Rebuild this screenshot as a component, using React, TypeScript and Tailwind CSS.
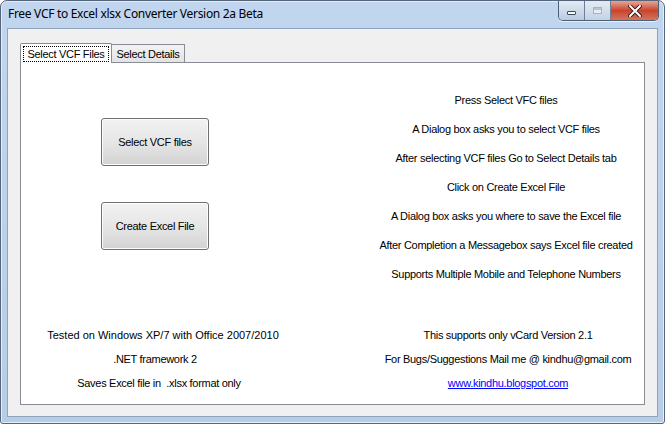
import * as React from "react"

const steps = [
  "Press Select VFC files",
  "A Dialog box asks you to select VCF files",
  "After selecting VCF files Go to Select Details tab",
  "Click on Create Excel File",
  "A Dialog box asks you where to save the Excel file",
  "After Completion a Messagebox says Excel file created",
  "Supports Multiple Mobile and Telephone Numbers",
]

function WinButton({ label }: { label: string }) {
  return (
    <button className="w-[108px] h-[48px] rounded-[3px] border border-[#707070] bg-gradient-to-b from-[#f2f2f2] via-[#e6e6e6] to-[#d3d3d3] shadow-[inset_0_0_0_1px_#fcfcfc] text-black">
      {label}
    </button>
  )
}

function CaptionButtons() {
  return (
    <div className="flex h-[20px] rounded-b-[5px] border border-t-0 border-[#4f5f73] overflow-hidden shadow-[0_1px_0_#e7eef7]">
      <div className="w-[26px] flex items-center justify-center bg-gradient-to-b from-[#e3ebf5] via-[#cfdbea] to-[#b9cbe1] border-r border-[#6d7f95]">
        <div className="w-[9px] h-[4px] mt-[5px] bg-white border border-[#3c4a5c] rounded-[1px]" />
      </div>
      <div className="w-[26px] flex items-center justify-center bg-gradient-to-b from-[#e3ebf5] via-[#d4dfec] to-[#c3d2e4] border-r border-[#6d7f95]">
        <div className="w-[9px] h-[7px] border border-[#a6b3c4] bg-[#e6edf5] shadow-[inset_0_2px_0_#b9c5d4]" />
      </div>
      <div className="w-[47px] flex items-center justify-center bg-gradient-to-b from-[#e6a494] via-[#c7442d] to-[#d4735c]">
        <svg width="14" height="12" viewBox="0 0 14 12">
          <path d="M2 1 L12 11 M12 1 L2 11" stroke="#3b1b14" strokeWidth="4" strokeLinecap="square" />
          <path d="M2 1 L12 11 M12 1 L2 11" stroke="#ffffff" strokeWidth="2" strokeLinecap="square" />
        </svg>
      </div>
    </div>
  )
}

export default function App() {
  return (
    <div className="w-[665px] h-[424px] bg-white">
      <div className="w-[665px] h-[424px] flex flex-col rounded-t-[7px] rounded-b-[3px] border border-[#566579] bg-gradient-to-b from-[#c1d6ee] via-[#bcd2eb] to-[#b6cde8] shadow-[inset_0_0_0_1px_#e4eef9]">
        <div className="h-[27px] flex items-start pl-[7px] pr-[5px]">
          <span className="mt-[5px] font-['Noto_Sans',sans-serif] text-[12px] leading-[16px] tracking-[-0.3px] text-black">
            Free VCF to Excel xlsx Converter Version 2a Beta
          </span>
          <div className="ml-auto">
            <CaptionButtons />
          </div>
        </div>
        <div className="flex-1 mx-[6px] mb-[6px] border border-[#8ea3bc] bg-[#f0f0f0] pt-[13px] pl-[12px] pr-[12px] pb-[11px] flex flex-col font-['Liberation_Sans',Arial,sans-serif] text-[11px] tracking-[-0.3px] text-black">
          <div className="flex items-end h-[20px]">
            <div className="relative z-10 -mb-px h-[20px] w-[92px] bg-white border border-b-0 border-[#898c95] rounded-t-[2px] px-[2px] pt-[2px]">
              <div className="h-[16px] border border-dotted border-black flex items-center justify-center leading-none">
                Select VCF Files
              </div>
            </div>
            <div className="h-[18px] w-[74px] -ml-px border border-b-0 border-[#898c95] bg-gradient-to-b from-[#f3f3f3] to-[#e3e3e3] flex items-center justify-center leading-none pt-[1px]">
              Select Details
            </div>
          </div>
          <div className="flex-1 bg-white border border-[#898c95] pt-[23px] flex flex-col">
            <div className="flex">
              <div className="w-[268px] flex flex-col items-center pt-[32px] gap-[36px]">
                <WinButton label="Select VCF files" />
                <WinButton label="Create Excel File" />
              </div>
              <div className="ml-auto w-[276px] flex flex-col">
                {steps.map((s) => (
                  <div key={s} className="h-[29px] flex items-center justify-center whitespace-nowrap">
                    {s}
                  </div>
                ))}
              </div>
            </div>
            <div className="flex mt-[34px]">
              <div className="w-[276px] flex flex-col">
                <div className="h-[24px] flex items-center justify-center pl-[8px] whitespace-nowrap tracking-[0px]">
                  Tested on Windows XP/7 with Office 2007/2010
                </div>
                <div className="h-[24px] flex items-center justify-center pr-[8px] whitespace-nowrap">
                  .NET framework 2
                </div>
                <div className="h-[24px] flex items-center justify-center whitespace-pre">
                  Saves Excel file in  .xlsx format only
                </div>
              </div>
              <div className="ml-auto w-[272px] flex flex-col">
                <div className="h-[24px] flex items-center justify-center whitespace-nowrap">
                  This supports only vCard Version 2.1
                </div>
                <div className="h-[24px] flex items-center justify-center whitespace-nowrap">
                  For Bugs/Suggestions Mail me @ kindhu@gmail.com
                </div>
                <div className="h-[24px] flex items-center justify-center">
                  <a href="#" className="text-[#0000ff] underline">
                    www.kindhu.blogspot.com
                  </a>
                </div>
              </div>
            </div>
          </div>
        </div>
      </div>
    </div>
  )
}
